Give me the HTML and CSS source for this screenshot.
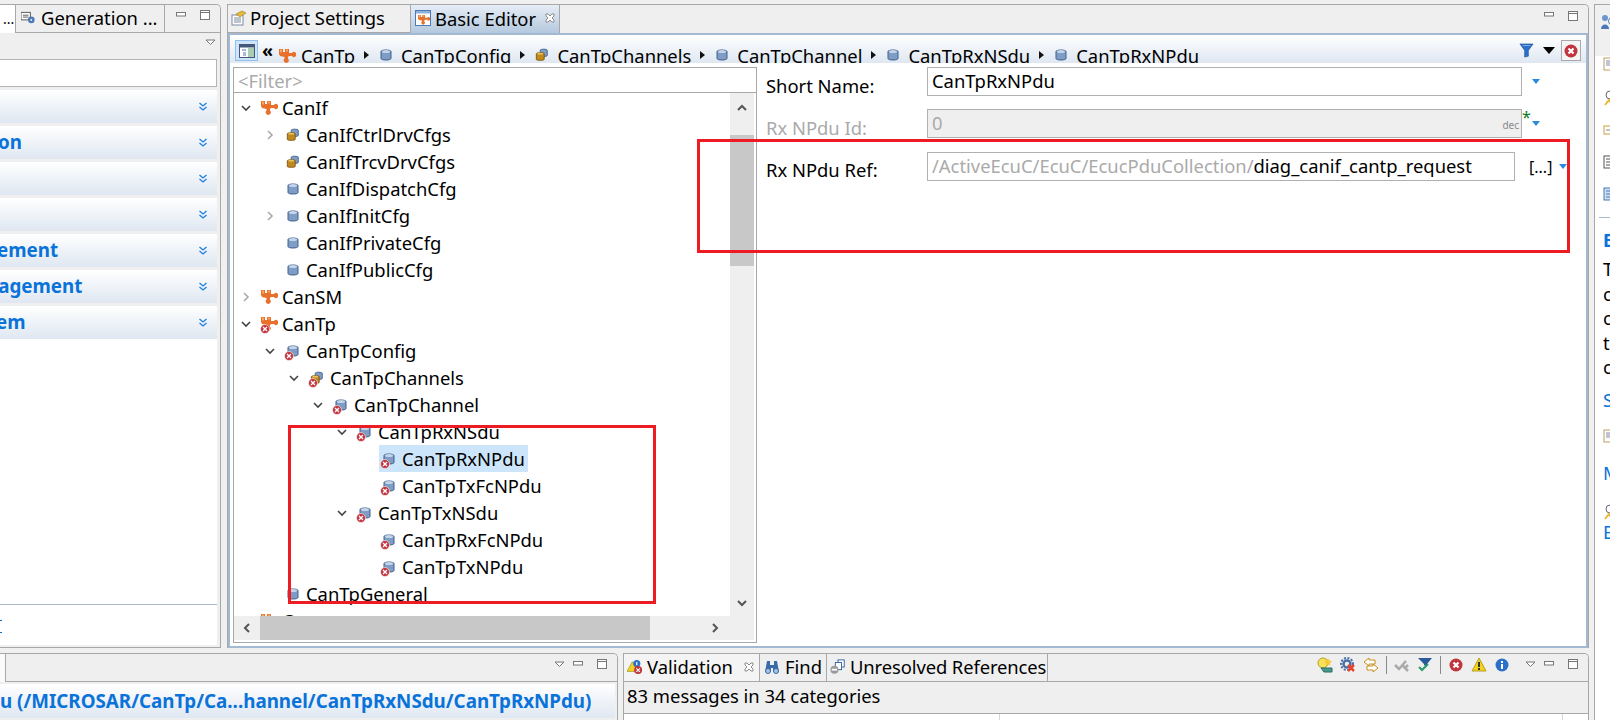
FILE: index.html

```html
<!DOCTYPE html>
<html lang="en">
<head>
<meta charset="utf-8"/>
<title>Basic Editor</title>
<link rel="stylesheet" href="styles.css">
</head>
<body>
<svg class="defs" width="0" height="0">
  <symbol id="puzzle" viewBox="0 0 17 15">
    <path fill="#e8702a" d="M0 1h4v3h2V1h4v4h3a2.500 2.500 0 1 1 0 3H10l-1 1v1.500a2.500 2.500 0 1 1-3.500 0V9L1 8 0 6z"/>
    <path fill="#f7a560" d="M1 1.500h2v3H1zM7 1.500h2v2H7z"/>
  </symbol>
  <symbol id="can" viewBox="0 0 14 14">
    <path fill="#7e9cc4" stroke="#3f5f8c" d="M2 3.500c0-2 10-2 10 0v7c0 2-10 2-10 0z"/>
    <ellipse cx="7" cy="3.500" rx="4" ry="1.500" fill="#c4d5ea"/>
  </symbol>
  <symbol id="cans" viewBox="0 0 16 16">
    <path fill="#7e9cc4" stroke="#3f5f8c" d="M6 2.500c0-1.500 8-1.500 8 0v6c0 1.500-8 1.500-8 0z"/>
    <path fill="#c08a1e" stroke="#7a5510" d="M1.500 6.500c0-1.500 9-1.500 9 0v6.500c0 1.500-9 1.500-9 0z"/>
    <ellipse cx="6" cy="6.500" rx="3.500" ry="1" fill="#e9c25e"/>
  </symbol>
  <symbol id="err" viewBox="0 0 10 10">
    <circle cx="5" cy="5" r="4.500" fill="#c1333d" stroke="#fff" stroke-width=".6"/>
    <path stroke="#fff" stroke-width="1.400" d="M3 3l4 4M7 3L3 7"/>
  </symbol>
  <symbol id="twisty-open" viewBox="0 0 10 10">
    <path fill="none" stroke="#444" stroke-width="1.600" d="M1 3l4 4 4-4"/>
  </symbol>
  <symbol id="twisty-shut" viewBox="0 0 10 10">
    <path fill="none" stroke="#aaa" stroke-width="1.600" d="M3 1l4 4-4 4"/>
  </symbol>
  <symbol id="dbl" viewBox="0 0 10 10">
    <path fill="none" stroke="#1a7ee0" stroke-width="1.300" d="M1.500 1l3.500 3 3.500-3M1.500 5l3.500 3 3.500-3"/>
  </symbol>
  <symbol id="min" viewBox="0 0 11 6">
    <rect x=".5" y=".5" width="9" height="3.500" fill="#fff" stroke="#777"/>
  </symbol>
  <symbol id="max" viewBox="0 0 11 11">
    <rect x=".5" y=".5" width="9" height="9" fill="#fff" stroke="#777"/>
    <path stroke="#777" d="M0 2.500h10"/>
  </symbol>
  <symbol id="menu" viewBox="0 0 11 7">
    <path fill="#fff" stroke="#777" d="M1 1h9L5.500 5.500z"/>
  </symbol>
  <symbol id="drop" viewBox="0 0 8 5">
    <path fill="#2a8ae0" d="M0 0h8L4 5z"/>
  </symbol>
  <symbol id="crumb" viewBox="0 0 5 8">
    <path fill="#111" d="M0 0l5 4-5 4z"/>
  </symbol>
</svg>

<div class="desk">
  <div class="main">
    <div class="upper">

      <section class="pane side">
        <div class="tabbar">
          <div class="tab tab-cut">...</div>
          <div class="tab tab-gen">
            <svg class="ico-16" viewBox="0 0 16 16"><rect x="0" y="2" width="10" height="8" fill="#fff" stroke="#555"/><path stroke="#555" d="M2 5h6M2 7h6"/><circle cx="11" cy="10" r="3.500" fill="#4a78b8"/><circle cx="11" cy="10" r="1" fill="#fff"/></svg>
            <span>Generation ...</span>
          </div>
          <div class="tab-tools">
            <svg class="btn-min"><use href="#min"/></svg>
            <svg class="btn-max"><use href="#max"/></svg>
          </div>
        </div>
        <div class="side-body">
          <div class="side-menu"><svg class="btn-menu"><use href="#menu"/></svg></div>
          <div class="side-search"></div>
          <div class="sect"><span></span><svg class="dbl"><use href="#dbl"/></svg></div>
          <div class="sect"><span class="cut-2">on</span><svg class="dbl"><use href="#dbl"/></svg></div>
          <div class="sect"><span></span><svg class="dbl"><use href="#dbl"/></svg></div>
          <div class="sect"><span></span><svg class="dbl"><use href="#dbl"/></svg></div>
          <div class="sect"><span class="cut-3">ement</span><svg class="dbl"><use href="#dbl"/></svg></div>
          <div class="sect"><span class="cut-14">nagement</span><svg class="dbl"><use href="#dbl"/></svg></div>
          <div class="sect"><span class="cut-4">em</span><svg class="dbl"><use href="#dbl"/></svg></div>
          <div class="side-fill"></div>
          <div class="side-foot"><span class="side-link"></span></div>
        </div>
      </section>

      <section class="pane editor">
        <div class="tabbar">
          <div class="tab tab-proj">
            <svg class="ico-16" viewBox="0 0 16 16"><rect x="1" y="5" width="11" height="10" fill="#fff" stroke="#7a8aa0"/><path stroke="#7a8aa0" d="M3 8h7M3 10h7M3 12h7"/><path fill="#e8b93a" stroke="#9a7a20" stroke-width=".6" d="M5 4l6-3 4 2-6 4z"/></svg>
            <span>Project Settings</span>
          </div>
          <div class="tab tab-basic">
            <svg class="ico-16" viewBox="0 0 16 16"><rect x=".5" y=".5" width="15" height="15" fill="#fff" stroke="#4a78b8"/><rect x="1" y="1" width="14" height="2.500" fill="#8fb0d8"/><use href="#puzzle" x="3" y="4" width="12" height="11"/></svg>
            <span>Basic Editor</span>
            <svg class="tab-x" viewBox="0 0 10 10"><path fill="#fff" stroke="#8a8a8a" d="M1 1h2l2 2 2-2h2v2L7 5l2 2v2H7L5 7 3 9H1V7l2-2-2-2z"/></svg>
          </div>
          <div class="tab-tools">
            <svg class="btn-min"><use href="#min"/></svg>
            <svg class="btn-max"><use href="#max"/></svg>
          </div>
        </div>
        <div class="editor-in">
          <div class="crumbs">
            <div class="crumb-toggle">
              <svg viewBox="0 0 16 14" width="16" height="14"><rect x=".5" y=".5" width="15" height="13" fill="#fff" stroke="#44597a"/><rect x="1" y="1" width="14" height="2.500" fill="#44597a"/><rect x="9" y="4" width="6" height="9" fill="#a8cdb0"/><path stroke="#4a78b8" d="M3 6h4M4 9h3M4 11h3"/></svg>
            </div>
            <span class="crumb-back">«</span>
            <div class="crumb c-tp"><svg class="ico-p"><use href="#puzzle"/></svg><span>CanTp</span></div>
            <svg class="crumb-arr"><use href="#crumb"/></svg>
            <div class="crumb"><svg class="ico-c"><use href="#can"/></svg><span>CanTpConfig</span></div>
            <svg class="crumb-arr"><use href="#crumb"/></svg>
            <div class="crumb"><svg class="ico-c"><use href="#cans"/></svg><span>CanTpChannels</span></div>
            <svg class="crumb-arr"><use href="#crumb"/></svg>
            <div class="crumb"><svg class="ico-c"><use href="#can"/></svg><span>CanTpChannel</span></div>
            <svg class="crumb-arr"><use href="#crumb"/></svg>
            <div class="crumb"><svg class="ico-c"><use href="#can"/></svg><span>CanTpRxNSdu</span></div>
            <svg class="crumb-arr"><use href="#crumb"/></svg>
            <div class="crumb"><svg class="ico-c"><use href="#can"/></svg><span>CanTpRxNPdu</span></div>
            <div class="crumb-tools">
              <svg viewBox="0 0 16 16" width="15" height="15"><path fill="#2a6fc8" stroke="#1a4a90" stroke-width=".6" d="M1 1h14L10 8v6l-4 1V8z"/><path fill="#9cc4ee" d="M3 2h10l-2 1H5z"/></svg>
              <svg viewBox="0 0 12 7" width="12" height="7"><path fill="#000" d="M0 0h12L6 7z"/></svg>
              <span class="crumb-close">
                <svg viewBox="0 0 14 14" width="14" height="14"><circle cx="7" cy="7" r="6.500" fill="#c1333d"/><path stroke="#fff" stroke-width="2.200" d="M4.500 4.500l5 5M9.500 4.500l-5 5"/></svg>
              </span>
            </div>
          </div>

          <div class="split">
            <div class="tree-box">
              <div class="filter">&lt;Filter&gt;</div>
              <div class="tree-mid">
                <div class="tree">
                  <div class="row l0"><svg class="tw"><use href="#twisty-open"/></svg><span class="ic"><svg class="ico-p"><use href="#puzzle"/></svg></span><span class="lbl">CanIf</span></div>
                  <div class="row l1"><svg class="tw"><use href="#twisty-shut"/></svg><span class="ic"><svg class="ico-c"><use href="#cans"/></svg></span><span class="lbl">CanIfCtrlDrvCfgs</span></div>
                  <div class="row l1"><i class="tw"></i><span class="ic"><svg class="ico-c"><use href="#cans"/></svg></span><span class="lbl">CanIfTrcvDrvCfgs</span></div>
                  <div class="row l1"><i class="tw"></i><span class="ic"><svg class="ico-c"><use href="#can"/></svg></span><span class="lbl">CanIfDispatchCfg</span></div>
                  <div class="row l1"><svg class="tw"><use href="#twisty-shut"/></svg><span class="ic"><svg class="ico-c"><use href="#can"/></svg></span><span class="lbl">CanIfInitCfg</span></div>
                  <div class="row l1"><i class="tw"></i><span class="ic"><svg class="ico-c"><use href="#can"/></svg></span><span class="lbl">CanIfPrivateCfg</span></div>
                  <div class="row l1"><i class="tw"></i><span class="ic"><svg class="ico-c"><use href="#can"/></svg></span><span class="lbl">CanIfPublicCfg</span></div>
                  <div class="row l0"><svg class="tw"><use href="#twisty-shut"/></svg><span class="ic"><svg class="ico-p"><use href="#puzzle"/></svg></span><span class="lbl">CanSM</span></div>
                  <div class="row l0"><svg class="tw"><use href="#twisty-open"/></svg><span class="ic"><svg class="ico-p"><use href="#puzzle"/></svg><svg class="bad"><use href="#err"/></svg></span><span class="lbl">CanTp</span></div>
                  <div class="row l1"><svg class="tw"><use href="#twisty-open"/></svg><span class="ic"><svg class="ico-c"><use href="#can"/></svg><svg class="bad"><use href="#err"/></svg></span><span class="lbl">CanTpConfig</span></div>
                  <div class="row l2"><svg class="tw"><use href="#twisty-open"/></svg><span class="ic"><svg class="ico-c"><use href="#cans"/></svg><svg class="bad"><use href="#err"/></svg></span><span class="lbl">CanTpChannels</span></div>
                  <div class="row l3"><svg class="tw"><use href="#twisty-open"/></svg><span class="ic"><svg class="ico-c"><use href="#can"/></svg><svg class="bad"><use href="#err"/></svg></span><span class="lbl">CanTpChannel</span></div>
                  <div class="row l4"><svg class="tw"><use href="#twisty-open"/></svg><span class="ic"><svg class="ico-c"><use href="#can"/></svg><svg class="bad"><use href="#err"/></svg></span><span class="lbl">CanTpRxNSdu</span></div>
                  <div class="row l5"><i class="tw"></i><span class="sel"><span class="ic"><svg class="ico-c"><use href="#can"/></svg><svg class="bad"><use href="#err"/></svg></span><span class="lbl">CanTpRxNPdu</span></span></div>
                  <div class="row l5"><i class="tw"></i><span class="ic"><svg class="ico-c"><use href="#can"/></svg><svg class="bad"><use href="#err"/></svg></span><span class="lbl">CanTpTxFcNPdu</span></div>
                  <div class="row l4"><svg class="tw"><use href="#twisty-open"/></svg><span class="ic"><svg class="ico-c"><use href="#can"/></svg><svg class="bad"><use href="#err"/></svg></span><span class="lbl">CanTpTxNSdu</span></div>
                  <div class="row l5"><i class="tw"></i><span class="ic"><svg class="ico-c"><use href="#can"/></svg><svg class="bad"><use href="#err"/></svg></span><span class="lbl">CanTpRxFcNPdu</span></div>
                  <div class="row l5"><i class="tw"></i><span class="ic"><svg class="ico-c"><use href="#can"/></svg><svg class="bad"><use href="#err"/></svg></span><span class="lbl">CanTpTxNPdu</span></div>
                  <div class="row l1"><i class="tw"></i><span class="ic"><svg class="ico-c"><use href="#can"/></svg></span><span class="lbl">CanTpGeneral</span></div>
                  <div class="row l0"><i class="tw"></i><span class="ic"><svg class="ico-p"><use href="#puzzle"/></svg></span><span class="lbl">Com</span></div>
                </div>
                <div class="vbar">
                  <svg class="sb-arr" viewBox="0 0 10 10"><path fill="none" stroke="#555" stroke-width="2" d="M1 7l4-4 4 4"/></svg>
                  <div class="vtrack"><div class="vthumb"></div></div>
                  <svg class="sb-arr" viewBox="0 0 10 10"><path fill="none" stroke="#555" stroke-width="2" d="M1 3l4 4 4-4"/></svg>
                </div>
              </div>
              <div class="hbar">
                <svg class="sb-arr" viewBox="0 0 10 10"><path fill="none" stroke="#555" stroke-width="2" d="M7 1L3 5l4 4"/></svg>
                <div class="htrack"><div class="hthumb"></div></div>
                <svg class="sb-arr" viewBox="0 0 10 10"><path fill="none" stroke="#555" stroke-width="2" d="M3 1l4 4-4 4"/></svg>
              </div>
            </div>

            <div class="form">
              <div class="field f-name">
                <label>Short Name:</label>
                <div class="input">CanTpRxNPdu</div>
                <svg class="drop"><use href="#drop"/></svg>
              </div>
              <div class="field f-id">
                <label class="off">Rx NPdu Id:</label>
                <div class="input input-off"><span>0</span><small>dec</small><b class="star">*</b></div>
                <svg class="drop"><use href="#drop"/></svg>
              </div>
              <div class="field f-ref">
                <label>Rx NPdu Ref:</label>
                <div class="input input-ref"><span class="path">/ActiveEcuC/EcuC/EcucPduCollection/</span>diag_canif_cantp_request</div>
                <span class="more">[...]</span>
                <svg class="drop"><use href="#drop"/></svg>
              </div>
            </div>
          </div>
        </div>
      </section>
    </div>

    <div class="lower">
      <section class="pane out">
        <div class="tabbar">
          <div class="tab tab-stub"></div>
          <div class="tab-tools">
            <svg class="btn-menu"><use href="#menu"/></svg>
            <svg class="btn-min"><use href="#min"/></svg>
            <svg class="btn-max"><use href="#max"/></svg>
          </div>
        </div>
        <div class="out-head">u (/MICROSAR/CanTp/Ca...hannel/CanTpRxNSdu/CanTpRxNPdu)</div>
      </section>

      <section class="pane valid">
        <div class="tabbar">
          <div class="tab tab-val">
            <svg class="ico-16" viewBox="0 0 18 18"><path fill="#f2d21e" stroke="#8a7a10" stroke-width=".6" d="M6 3l6 11H0z"/><circle cx="11" cy="5" r="4" fill="#2a6fc8"/><rect x="10.300" y="3.500" width="1.400" height="3.500" fill="#fff"/><circle cx="12.500" cy="12.500" r="4.500" fill="#c1333d"/><path stroke="#fff" stroke-width="1.300" d="M10.500 10.500l4 4M14.500 10.500l-4 4"/></svg>
            <span>Validation</span>
            <svg class="tab-x" viewBox="0 0 10 10"><path fill="#fff" stroke="#8a8a8a" d="M1 1h2l2 2 2-2h2v2L7 5l2 2v2H7L5 7 3 9H1V7l2-2-2-2z"/></svg>
          </div>
          <div class="tab tab-find">
            <svg class="ico-16" viewBox="0 0 16 16"><path fill="#3a6aa8" d="M3 2h3v4h4V2h3l2 11h-6V9H7v4H1z"/><circle cx="4" cy="12" r="2.500" fill="#a8c4e6" stroke="#3a6aa8"/><circle cx="12" cy="12" r="2.500" fill="#a8c4e6" stroke="#3a6aa8"/></svg>
            <span>Find</span>
          </div>
          <div class="tab tab-unres">
            <svg class="ico-16" viewBox="0 0 18 18"><rect x="9" y="1" width="7" height="8" fill="#fff" stroke="#2a5a9a"/><rect x="6" y="4" width="7" height="8" fill="#fff" stroke="#2a5a9a"/><circle cx="5" cy="12" r="4.500" fill="#9a9a9a"/><rect x="2" y="11" width="6" height="2" fill="#fff"/></svg>
            <span>Unresolved References</span>
          </div>
          <div class="val-tools">
            <svg class="ico-16" viewBox="0 0 16 16"><circle cx="6" cy="6" r="5" fill="#f4e25a" stroke="#b8a020"/><path fill="#f6c83a" d="M11 1l1.300 2.500L15 4l-2 2 .5 2.700L11 7.500 8.500 8.700 9 6 7 4l2.700-.5z"/><path fill="#4a9a8a" stroke="#2a6a6a" d="M4 11h11v4H7z"/></svg>
            <svg class="ico-16" viewBox="0 0 16 16"><circle cx="7" cy="7" r="6" fill="none" stroke="#4a6ea8" stroke-width="2" stroke-dasharray="2 1.500"/><circle cx="7" cy="7" r="3.500" fill="none" stroke="#4a6ea8" stroke-width="2.500"/><path stroke="#e8442a" stroke-width="2.500" d="M8 8l6 6M14 8l-6 6"/></svg>
            <svg class="ico-16" viewBox="0 0 16 16"><path fill="#fff" stroke="#c8901e" d="M6 1L1 5l5 4V7h6V3H6zM10 7l5 4-5 4v-2H4V9h6z"/></svg>
            <i class="tool-sep"></i>
            <svg class="ico-16" viewBox="0 0 16 16"><path fill="none" stroke="#aaa" stroke-width="2.500" d="M1 8l4 4 7-8M8 8l6 6M14 8l-3 3"/></svg>
            <svg class="ico-16" viewBox="0 0 16 16"><path fill="#2a5a9a" d="M1 1h14L10 7v3L7 8V7z"/><path fill="none" stroke="#2a9a6a" stroke-width="2" d="M2 10l3 3 6-6"/></svg>
            <i class="tool-sep"></i>
            <svg class="ico-16" viewBox="0 0 16 16"><circle cx="8" cy="8" r="6.500" fill="#c1333d"/><path stroke="#fff" stroke-width="2.200" d="M5.500 5.500l5 5M10.500 5.500l-5 5"/></svg>
            <svg class="ico-16" viewBox="0 0 16 16"><path fill="#f2d21e" stroke="#b8a020" d="M8 1l7 13H1z"/><rect x="7" y="5" width="2" height="5" fill="#333"/><rect x="7" y="11" width="2" height="2" fill="#333"/></svg>
            <svg class="ico-16" viewBox="0 0 16 16"><circle cx="8" cy="8" r="6.500" fill="#2a6fc8"/><rect x="7" y="7" width="2" height="5" fill="#fff"/><rect x="7" y="4" width="2" height="2" fill="#fff"/></svg>
          </div>
          <div class="tab-tools">
            <svg class="btn-menu"><use href="#menu"/></svg>
            <svg class="btn-min"><use href="#min"/></svg>
            <svg class="btn-max"><use href="#max"/></svg>
          </div>
        </div>
        <div class="val-count">83 messages in 34 categories</div>
        <div class="val-table">
          <div class="col-a"></div>
          <div class="col-b"></div>
        </div>
      </section>
    </div>
  </div>

  <aside class="help">
    <div class="help-top">
      <svg class="ico-16" viewBox="0 0 16 16"><circle cx="5" cy="4" r="3" fill="#6a96cc"/><path fill="#4a78b8" d="M1 15c0-6 8-6 8 0z"/><circle cx="12" cy="7" r="3.500" fill="#fff" stroke="#4a78b8"/></svg>
    </div>
    <div class="help-body">
      <svg class="hi hi-1" viewBox="0 0 16 16"><rect x="1" y="1" width="9" height="12" fill="#fff" stroke="#b8a060"/><path stroke="#88a" d="M3 4h5M3 6h5M3 8h5"/></svg>
      <svg class="hi" viewBox="0 0 16 16"><circle cx="7" cy="5" r="4" fill="#fff" stroke="#667"/><path fill="none" stroke="#e8b93a" stroke-width="2" d="M2 15l4-5 3 5"/></svg>
      <svg class="hi" viewBox="0 0 16 16"><rect x="1" y="4" width="8" height="8" fill="#fff" stroke="#c8a040"/><path stroke="#888" d="M3 8h4"/></svg>
      <svg class="hi" viewBox="0 0 16 16"><rect x="1" y="1" width="9" height="12" fill="#fff" stroke="#555"/><path stroke="#555" d="M3 4h5M3 7h5M3 10h5"/></svg>
      <svg class="hi" viewBox="0 0 16 16"><rect x="1" y="1" width="9" height="12" fill="#cfe0f2" stroke="#4a78b8"/><path stroke="#4a78b8" d="M3 4h5M3 7h5M3 10h5"/></svg>
      <hr class="help-rule">
      <div class="help-title">B</div>
      <div class="help-text first">T</div>
      <div class="help-text">c</div>
      <div class="help-text">c</div>
      <div class="help-text">t</div>
      <div class="help-text">c</div>
      <div class="help-link l-s">S</div>
      <svg class="hi hi-s" viewBox="0 0 16 16"><rect x="1" y="1" width="9" height="12" fill="#fff" stroke="#b8a060"/><path stroke="#88a" d="M3 4h5M3 6h5M3 8h5"/></svg>
      <div class="help-link l-m">M</div>
      <svg class="hi hi-m" viewBox="0 0 16 16"><circle cx="7" cy="5" r="4" fill="#fff" stroke="#667"/><path fill="none" stroke="#e8b93a" stroke-width="2" d="M2 15l4-5 3 5"/></svg>
      <div class="help-link">E</div>
    </div>
  </aside>
</div>

<div class="mark mark-tree"></div>
<div class="mark mark-form"></div>
</body>
</html>
```

FILE: styles.css

```css
* {
  box-sizing: border-box;
}
html, body {
  margin: 0;
  height: 720px;
  overflow: hidden;
}
body {
  position: relative;
  background-color: #f0f0f0;
  font-family: "Noto Sans", "Open Sans", sans-serif;
  font-size: 18.400px;
  color: #000;
}
.defs {
  position: absolute;
}
.desk {
  display: flex;
  width: 1610px;
  height: 720px;
}
.main {
  width: 1589px;
  display: flex;
  flex-direction: column;
  padding-top: 4px;
}
.upper {
  display: flex;
  height: 644px;
  flex: none;
}
.lower {
  display: flex;
  margin-top: 5px;
  flex: 1;
  min-height: 0;
}
.pane {
  border-top: 1px solid #a8a8a8;
  border-top-right-radius: 5px;
  display: flex;
  flex-direction: column;
  background-color: #efefef;
  overflow: hidden;
}
.tabbar {
  display: flex;
  height: 28px;
  flex: none;
  align-items: stretch;
  background-color: #efefef;
  white-space: nowrap;
}
.tab {
  display: flex;
  align-items: center;
  gap: 4px;
  padding: 0 4px 2px;
  border-right: 1px solid #a8a8a8;
  border-bottom: 1px solid #a8a8a8;
  background-color: #efefef;
  flex: none;
}
.tab-tools {
  margin-left: auto;
  display: flex;
  align-items: center;
  justify-content: flex-end;
  gap: 13px;
  padding: 0 9px 6px 0;
}
.tab-tools .btn-menu {
  margin-right: -5px;
}
.btn-min {
  width: 11px;
  height: 6px;
  margin-bottom: 2px;
}
.btn-max {
  width: 11px;
  height: 11px;
}
.btn-menu {
  width: 11px;
  height: 7px;
}
.ico-16 {
  width: 16px;
  height: 16px;
  flex: none;
}
.ico-p {
  width: 17px;
  height: 15px;
  flex: none;
}
.ico-c {
  width: 14px;
  height: 14px;
  flex: none;
}
.tab-x {
  width: 10px;
  height: 10px;
  flex: none;
}

/* left view */
.side {
  width: 221px;
  flex: none;
  border-right: 1px solid #a8a8a8;
}
.tab-cut {
  width: 16px;
  padding: 0 0 2px 3px;
  background-color: #fff;
  border-bottom: none;
  border-right: 1px solid #a8a8a8;
  font-size: 14px;
  overflow: hidden;
}
.tab-gen {
  width: 149px;
  padding-left: 5px;
  gap: 5px;
}
.tab-gen .ico-16 {
  width: 15px;
}
.tab-gen + .tab-tools {
  flex: 1;
  border-bottom: 1px solid #a8a8a8;
}
.side-body {
  flex: 1;
  min-height: 0;
  display: flex;
  flex-direction: column;
  background-color: #efefef;
  border-bottom: 1px solid #a8a8a8;
  padding: 0 3px 2px 0;
}
.side-menu {
  height: 26px;
  display: flex;
  justify-content: flex-end;
  align-items: flex-start;
  padding: 6px 4px 0 0;
  margin-right: -3px;
  flex: none;
}
.side-search {
  height: 28px;
  background-color: #fff;
  border: 1px solid #b4b4b4;
  border-left: none;
  flex: none;
}
.sect {
  height: 33px;
  margin-top: 3px;
  padding-right: 9px;
  display: flex;
  align-items: center;
  justify-content: space-between;
  background: linear-gradient(#fff, #dfe7f1);
  color: #0a73d9;
  font-weight: 700;
  font-size: 18.800px;
  flex: none;
  overflow: hidden;
}
.sect span {
  margin-top: -2px;
}
.cut-2 { margin-left: -2px; }
.cut-3 { margin-left: -3px; }
.cut-4 { margin-left: -4px; }
.cut-14 { margin-left: -14px; }
.dbl {
  width: 10px;
  height: 10px;
  flex: none;
}
.side-fill {
  flex: 1;
  background-color: #fff;
}
.side-foot {
  height: 41px;
  flex: none;
  background-color: #fff;
  border-top: 1px solid #a9b8c8;
  padding-top: 15px;
}
.side-link {
  display: block;
  width: 2px;
  height: 13px;
  border-top: 1px solid #0a73d9;
  border-bottom: 1px solid #0a73d9;
}

/* editor */
.editor {
  width: 1362px;
  flex: none;
  margin-left: 6px;
  border-left: 1px solid #a8a8a8;
  border-right: 1px solid #a8a8a8;
}
.tab-proj {
  width: 183px;
  padding-left: 3px;
  gap: 3px;
}
.tab-basic {
  width: 149px;
  gap: 4px;
  background: linear-gradient(#e6edf6, #b4c8de);
  border-bottom: none;
}
.tab-basic .tab-x {
  margin-left: 5px;
}
.tab-proj + .tab-basic + .tab-tools {
  flex: 1;
}
.editor-in {
  flex: 1;
  min-height: 0;
  display: flex;
  flex-direction: column;
  background-color: #fff;
  border: 2px solid #a3b8d1;
}
.crumbs {
  height: 28px;
  flex: none;
  display: flex;
  align-items: flex-start;
  background: linear-gradient(#fff, #dfe7f1);
  overflow: hidden;
  padding-left: 5px;
}
.crumb-toggle {
  width: 23px;
  height: 21px;
  margin-top: 5px;
  background-color: #cfe4fa;
  border: 1px solid #8fc0ee;
  display: flex;
  align-items: center;
  justify-content: center;
  flex: none;
}
.crumb-back {
  margin: 3px 6px 0 4px;
  font-size: 18px;
  font-weight: 700;
  line-height: 24px;
}
.crumb {
  display: flex;
  align-items: center;
  gap: 8px;
  height: 28px;
  margin-top: 6px;
  flex: none;
}
.c-tp {
  gap: 5px;
}
.crumb-arr {
  width: 5px;
  height: 8px;
  margin: 16px 10px 0 9px;
  flex: none;
}
.crumb-tools {
  margin-left: auto;
  display: flex;
  align-items: center;
  gap: 9px;
  height: 21px;
  margin-top: 5px;
  padding-right: 5px;
}
.crumb-close {
  width: 20px;
  height: 21px;
  margin-left: -3px;
  border: 1px solid #aaa;
  display: flex;
  align-items: center;
  justify-content: center;
  background-color: #f4f4f4;
}
.split {
  flex: 1;
  min-height: 0;
  display: flex;
  background-color: #fff;
  padding: 4px 0 3px 3px;
}
.tree-box {
  width: 524px;
  flex: none;
  display: flex;
  flex-direction: column;
  border: 1px solid #a8a8a8;
  padding: 0 2px 2px 0;
}
.filter {
  height: 25px;
  flex: none;
  border-bottom: 1px solid #a8a8a8;
  margin-right: -2px;
  color: #aaa;
  line-height: 25px;
  padding-left: 4px;
}
.tree-mid {
  flex: 1;
  min-height: 0;
  display: flex;
}
.tree {
  flex: 1;
  min-width: 0;
  overflow: hidden;
  padding-top: 1px;
}
.row {
  height: 27px;
  display: flex;
  align-items: center;
  white-space: nowrap;
}
.l0 { padding-left: 6px; }
.l1 { padding-left: 30px; }
.l2 { padding-left: 54px; }
.l3 { padding-left: 78px; }
.l4 { padding-left: 102px; }
.l5 { padding-left: 126px; }
.tw {
  width: 12px;
  height: 10px;
  flex: none;
  display: block;
}
.ic {
  position: relative;
  width: 20px;
  margin-left: 7px;
  height: 18px;
  display: flex;
  align-items: center;
  justify-content: center;
  flex: none;
}
.bad {
  position: absolute;
  left: 1px;
  bottom: -1px;
  width: 10px;
  height: 10px;
}
.lbl {
  margin-left: 3px;
}
.sel {
  display: flex;
  align-items: center;
  height: 27px;
  margin-left: 7px;
  background-color: #cde5fb;
  padding-right: 3px;
}
.sel .ic {
  margin-left: 0;
}
.vbar {
  width: 24px;
  flex: none;
  background-color: #efefef;
  display: flex;
  flex-direction: column;
  align-items: center;
  padding: 10px 0 8px;
}
.sb-arr {
  width: 10px;
  height: 10px;
  flex: none;
}
.vtrack {
  flex: 1;
  width: 100%;
  padding-top: 22px;
}
.vthumb {
  height: 131px;
  background-color: #c8c8c8;
}
.hbar {
  height: 24px;
  flex: none;
  background-color: #efefef;
  display: flex;
  align-items: center;
  padding: 0 34px 0 8px;
}
.htrack {
  flex: 1;
  height: 100%;
  padding-left: 8px;
}
.hthumb {
  width: 390px;
  height: 100%;
  background-color: #c8c8c8;
}

/* form */
.form {
  flex: 1;
  min-width: 0;
  padding-left: 9px;
}
.field {
  display: flex;
  align-items: flex-start;
}
.field label {
  width: 161px;
  flex: none;
  line-height: 29px;
  padding-top: 4px;
}
.f-id {
  margin-top: 9px;
}
.f-ref {
  margin-top: 10px;
}
.f-ref label {
  padding-top: 3px;
}
.off {
  color: #aaa;
}
.input {
  width: 595px;
  height: 29px;
  border: 1px solid #b0b0b0;
  line-height: 25px;
  padding-left: 4px;
  flex: none;
  position: relative;
  background-color: #fff;
  white-space: nowrap;
}
.input-off {
  background-color: #efefef;
  color: #aaa;
  display: flex;
  justify-content: space-between;
}
.input-off small {
  font-size: 10px;
  color: #888;
  padding: 3px 2px 0 0;
}
.star {
  position: absolute;
  left: 594px;
  top: -5px;
  color: #0a7a1a;
  font-weight: 400;
  font-size: 16px;
}
.input-ref {
  width: 588px;
}
.path {
  color: #aaa;
}
.drop {
  width: 8px;
  height: 5px;
  margin: 12px 0 0 10px;
  flex: none;
}
.more {
  margin-left: 14px;
  line-height: 30px;
  font-size: 16px;
}
.more + .drop {
  margin-left: 7px;
}

/* lower views */
.out {
  width: 618px;
  flex: none;
  border-right: 1px solid #a8a8a8;
}
.tab-stub {
  width: 6px;
  padding: 0;
  background-color: #fafafa;
  border-bottom: none;
}
.tab-stub + .tab-tools {
  flex: 1;
  border-bottom: 1px solid #a8a8a8;
}
.out-head {
  margin: 2px 2px 0 0;
  height: 34px;
  background: linear-gradient(#fff, #dfe7f1);
  color: #0a73d9;
  font-weight: 700;
  font-size: 18.800px;
  line-height: 34px;
  white-space: nowrap;
  overflow: hidden;
}
.valid {
  flex: 1;
  margin-left: 5px;
  border-left: 1px solid #a8a8a8;
  border-right: 1px solid #a8a8a8;
}
.valid .tabbar {
  border-bottom: 1px solid #a8a8a8;
}
.valid .tab {
  border-bottom: none;
}
.valid .tab-tools {
  margin-left: 0;
  flex: none;
}
.tab-val {
  width: 136px;
  padding-left: 3px;
  gap: 4px;
  background-color: #f4f4f4;
}
.tab-val .tab-x {
  margin-left: 7px;
}
.tab-find {
  width: 67px;
  gap: 5px;
  padding-left: 4px;
}
.tab-unres {
  width: 221px;
  gap: 4px;
  padding-left: 3px;
  letter-spacing: -0.100px;
}
.val-tools {
  margin-left: auto;
  display: flex;
  align-items: center;
  gap: 7px;
  padding: 0 15px 6px 0;
}
.tool-sep {
  width: 1px;
  height: 18px;
  background-color: #888;
}
.val-count {
  height: 32px;
  line-height: 27px;
  padding-left: 3px;
  flex: none;
  border-bottom: 1px solid #a8a8a8;
}
.val-table {
  flex: 1;
  display: flex;
  background-color: #fff;
}
.col-a {
  width: 376px;
  border-right: 1px solid #d8d8d8;
}
.col-b {
  width: 563px;
  border-right: 1px solid #d8d8d8;
}

/* help strip on the right */
.help {
  flex: 1;
  min-width: 0;
  margin-left: 5px;
  margin-top: 4px;
  border-left: 1px solid #a8a8a8;
  border-top: 1px solid #a8a8a8;
  display: flex;
  flex-direction: column;
  overflow: hidden;
}
.help-top {
  height: 51px;
  flex: none;
  padding: 5px 0 0 5px;
}
.help-body {
  flex: 1;
  background-color: #fff;
  padding-left: 8px;
  white-space: nowrap;
}
.hi {
  display: block;
  width: 16px;
  height: 16px;
  margin: 16.500px 0 0 0;
}
.hi-1 {
  margin-top: 1px;
}
.help-rule {
  border: none;
  border-top: 1px solid #a9b8c8;
  margin: 14px 0 8px -4px;
  width: 30px;
}
.help-title {
  color: #0a73d9;
  font-weight: 700;
  line-height: 28px;
}
.help-text {
  line-height: 24.500px;
}
.help-text.first {
  margin-top: 3px;
}
.help-link {
  color: #0a73d9;
  line-height: 24px;
}
.l-s {
  margin-top: 8.500px;
}
.hi-s {
  margin-top: 17px;
}
.l-m {
  margin-top: 16px;
}
.hi-m {
  margin-top: 19px;
}

/* red annotation boxes sit on top of everything */
.mark {
  position: absolute;
  border: 3px solid #ed1c24;
  pointer-events: none;
}
.mark-tree {
  left: 288px;
  top: 425px;
  width: 368px;
  height: 179px;
}
.mark-form {
  left: 697px;
  top: 139px;
  width: 873px;
  height: 114px;
}
```
